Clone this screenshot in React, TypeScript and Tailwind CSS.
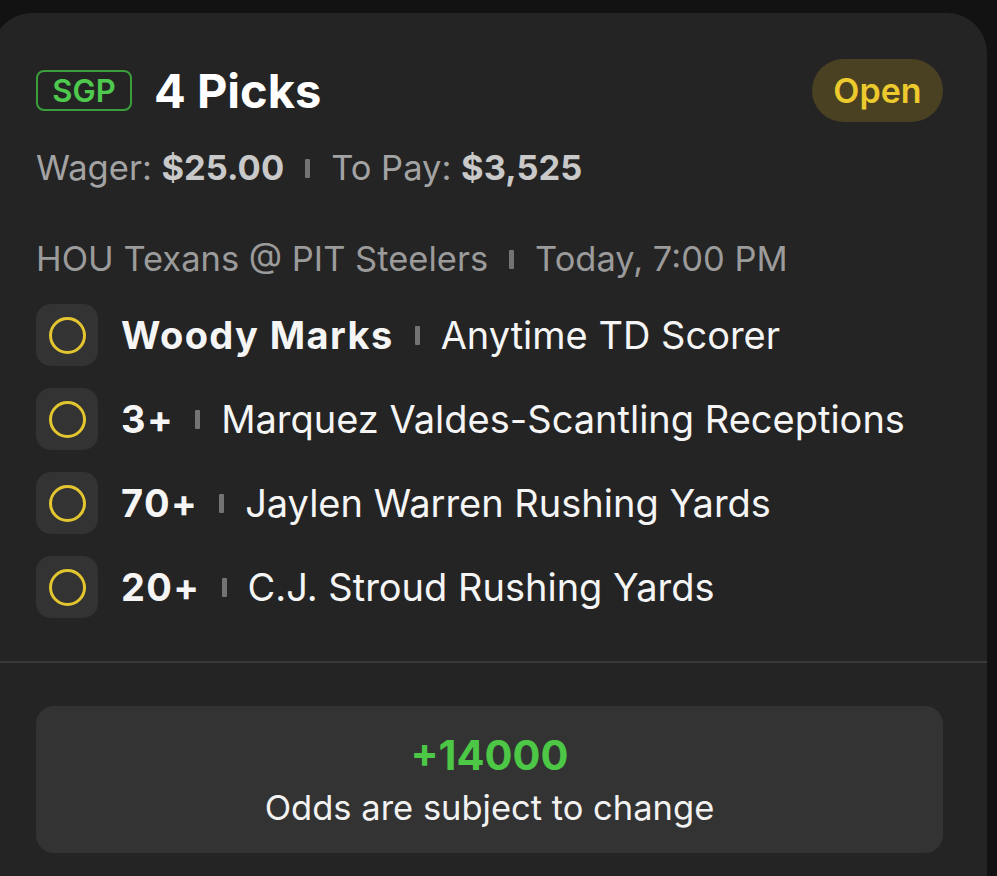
import React from "react";

function Sep() {
  return <span className="inline-block w-[5px] h-[19px] bg-[#737373] rounded-[1px] mx-[21px] shrink-0" />;
}

function Pick({ bold, rest }: { bold: string; rest: string }) {
  return (
    <div className="flex items-center h-[62px]">
      <div className="w-[62px] h-[62px] rounded-[15px] bg-[#333333] flex items-center justify-center shrink-0">
        <div className="w-[37px] h-[37px] rounded-full border-[3px] border-[#e3c62f]" />
      </div>
      <div className="flex items-center ml-[23px] text-[38px] leading-[46px] text-[#f5f5f5] whitespace-nowrap">
        <span className="font-bold tracking-[1.4px]">{bold}</span>
        <Sep />
        <span>{rest}</span>
      </div>
    </div>
  );
}

export default function App() {
  return (
    <div
      className="min-h-screen bg-[#121212] pt-[13px] overflow-hidden"
      style={{ fontFamily: "Inter, 'Noto Sans', sans-serif" }}
    >
      <div className="ml-[-8px] w-[995px] rounded-t-[40px] bg-[#242424] min-h-[880px]">
        <div className="pl-[44px] pr-[44px] pt-[46px] pb-[43px]">
          <div className="flex items-center justify-between h-[63px]">
            <div className="flex items-center">
              <div className="h-[41px] w-[96px] rounded-[8px] border-2 border-[#3a9e3a] flex items-center justify-center text-[#4ec94e] text-[31px] font-semibold leading-none">
                SGP
              </div>
              <div className="ml-[22px] text-white text-[47px] font-bold leading-none">4 Picks</div>
            </div>
            <div className="h-[63px] w-[131px] rounded-full bg-[#4a4123] flex items-center justify-center text-[#ecc92c] text-[34px] font-semibold">
              Open
            </div>
          </div>
          <div className="mt-[26px] flex items-center h-[40px] text-[34.5px] text-[#a3a3a3] whitespace-nowrap">
            <span>Wager:&nbsp;</span>
            <span className="font-bold text-[#c9c9c9]">$25.00</span>
            <Sep />
            <span>To Pay:&nbsp;</span>
            <span className="font-bold text-[#c9c9c9]">$3,525</span>
          </div>
          <div className="mt-[51px] flex items-center h-[40px] text-[34.5px] text-[#9b9b9b] whitespace-nowrap">
            <span>HOU Texans @ PIT Steelers</span>
            <Sep />
            <span>Today, 7:00 PM</span>
          </div>
          <div className="mt-[25px] flex flex-col gap-[22px]">
            <Pick bold="Woody Marks" rest="Anytime TD Scorer" />
            <Pick bold="3+" rest="Marquez Valdes-Scantling Receptions" />
            <Pick bold="70+" rest="Jaylen Warren Rushing Yards" />
            <Pick bold="20+" rest="C.J. Stroud Rushing Yards" />
          </div>
        </div>
        <div className="h-[2px] bg-[#393939]" />
        <div className="pl-[44px] pr-[44px] pt-[43px]">
          <div className="h-[147px] rounded-[18px] bg-[#333333] flex flex-col items-center justify-center gap-[9px]">
            <div className="text-[41.5px] leading-[48px] font-bold text-[#4cc746]">+14000</div>
            <div className="text-[34.5px] leading-[40px] text-[#f2f2f2]">Odds are subject to change</div>
          </div>
        </div>
      </div>
    </div>
  );
}
